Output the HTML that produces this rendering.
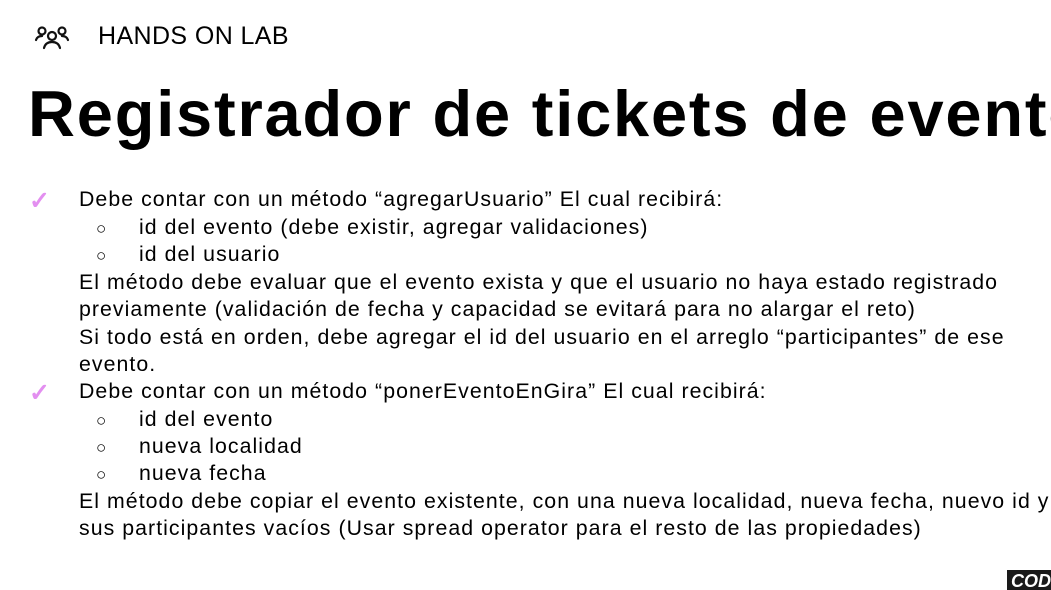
<!DOCTYPE html>
<html><head><meta charset="utf-8"><style>
body{margin:0;width:1051px;height:588px;overflow:hidden;background:#fff;font-family:"Liberation Sans",sans-serif;color:#000;position:relative}
.hdr{position:absolute;left:98px;top:22px;font-size:25px;letter-spacing:0.4px}
.icon{position:absolute;left:34px;top:25px}
h1{position:absolute;left:28px;top:76px;width:1023px;overflow:hidden;margin:0;font-size:65px;font-weight:bold;white-space:nowrap;letter-spacing:1.8px}
.l{position:absolute;font-size:21.3px;white-space:nowrap;letter-spacing:1.05px;line-height:27px}
.ck{position:absolute;left:29px;color:#e38ff0;font-size:25px;font-weight:bold}
.b{position:absolute;left:96px;font-size:17px}
.logo{position:absolute;left:1007px;top:570px;width:40px;height:20px;overflow:hidden;background:#1a1a1a;color:#fff;font-weight:bold;font-style:italic;font-size:18px;line-height:22px;padding-left:4px}
</style></head><body>
<svg class="icon" width="36" height="26" viewBox="0 0 36 26" fill="none" stroke="#111" stroke-width="2.2" stroke-linecap="round">
<circle cx="8" cy="6" r="3.5"/><circle cx="28" cy="6" r="3.5"/><circle cx="18" cy="11" r="4"/>
<path d="M2 15c1-3 3-4 6-4M34 15c-1-3-3-4-6-4M10 23c1-4 4-6 8-6s7 2 8 6"/>
</svg>
<div class="hdr">HANDS ON LAB</div>
<h1>Registrador de tickets de eventos</h1>
<div class="ck" style="top:186px">✓</div>
<div class="l" style="left:79px;top:186px">Debe contar con un método “agregarUsuario” El cual recibirá:</div>
<div class="b" style="top:219px">○</div><div class="l" style="left:139px;top:214px">id del evento (debe existir, agregar validaciones)</div>
<div class="b" style="top:246px">○</div><div class="l" style="left:139px;top:241px">id del usuario</div>
<div class="l" style="left:79px;top:269px">El método debe evaluar que el evento exista y que el usuario no haya estado registrado</div>
<div class="l" style="left:79px;top:296px">previamente (validación de fecha y capacidad se evitará para no alargar el reto)</div>
<div class="l" style="left:79px;top:324px">Si todo está en orden, debe agregar el id del usuario en el arreglo “participantes” de ese</div>
<div class="l" style="left:79px;top:351px">evento.</div>
<div class="ck" style="top:378px">✓</div>
<div class="l" style="left:79px;top:378px">Debe contar con un método “ponerEventoEnGira” El cual recibirá:</div>
<div class="b" style="top:411px">○</div><div class="l" style="left:139px;top:406px">id del evento</div>
<div class="b" style="top:438px">○</div><div class="l" style="left:139px;top:433px">nueva localidad</div>
<div class="b" style="top:465px">○</div><div class="l" style="left:139px;top:460px">nueva fecha</div>
<div class="l" style="left:79px;top:488px">El método debe copiar el evento existente, con una nueva localidad, nueva fecha, nuevo id y</div>
<div class="l" style="left:79px;top:515px">sus participantes vacíos (Usar spread operator para el resto de las propiedades)</div>
<div class="logo">COD</div>
</body></html>
